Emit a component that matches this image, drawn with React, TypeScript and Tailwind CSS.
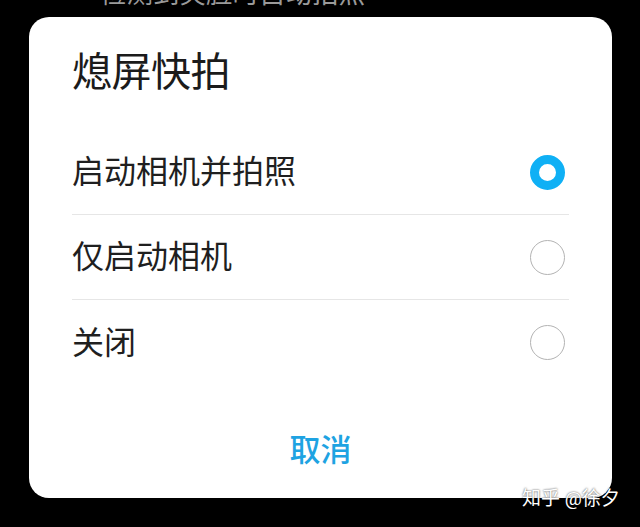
const font = "font-['Roboto','Noto_Sans_CJK_SC',sans-serif]";

const options = ['启动相机并拍照', '仅启动相机', '关闭'];

function Radio({ checked }: { checked: boolean }) {
    if (checked) {
        return <span className="w-[35px] h-[35px] rounded-full border-[9px] border-[#0fb0f5] bg-white shrink-0" />;
    }
    return <span className="w-[35px] h-[35px] rounded-full border-[1.5px] border-[#b3b3b3] bg-white shrink-0" />;
}

export default function App() {
    return (
        <div className={`relative w-[640px] h-[527px] bg-black overflow-hidden ${font}`}>
            {/* background setting text, cut off by the top edge */}
            <div className="h-[17px] overflow-hidden">
                <p className="mt-[-20px] pl-[100px] text-[26.5px] leading-[27px] text-[#9a9a9a]">检测到笑脸时自动拍照</p>
            </div>

            <div className="ml-[29px] w-[583px] h-[481px] bg-white rounded-[20px] px-[43px] pt-[36px] flex flex-col">
                <h2 className="text-[40px] leading-[40px] text-[#1b1b1b] tracking-[-0.5px]">熄屏快拍</h2>

                <ul className="mt-[37px] flex flex-col">
                    {options.map((label, i) => (
                        <li
                            key={label}
                            className={`h-[85px] flex items-center justify-between pr-[4px] ${i < options.length - 1 ? 'border-b border-[#e6e6e6]' : ''}`}
                        >
                            <span className="text-[32px] leading-[32px] text-[#1f1f1f]">{label}</span>
                            <Radio checked={i === 0} />
                        </li>
                    ))}
                </ul>

                <button className="mt-[35px] h-[62px] flex items-center justify-center text-[31px] font-medium text-[#1ea3e2]">
                    取消
                </button>
            </div>

            <span className="absolute left-[522px] top-[489px] text-[19px] leading-[20px] text-white [text-shadow:0_0_2px_rgba(0,0,0,0.8)]">
                知乎 @徐夕
            </span>
        </div>
    );
}
